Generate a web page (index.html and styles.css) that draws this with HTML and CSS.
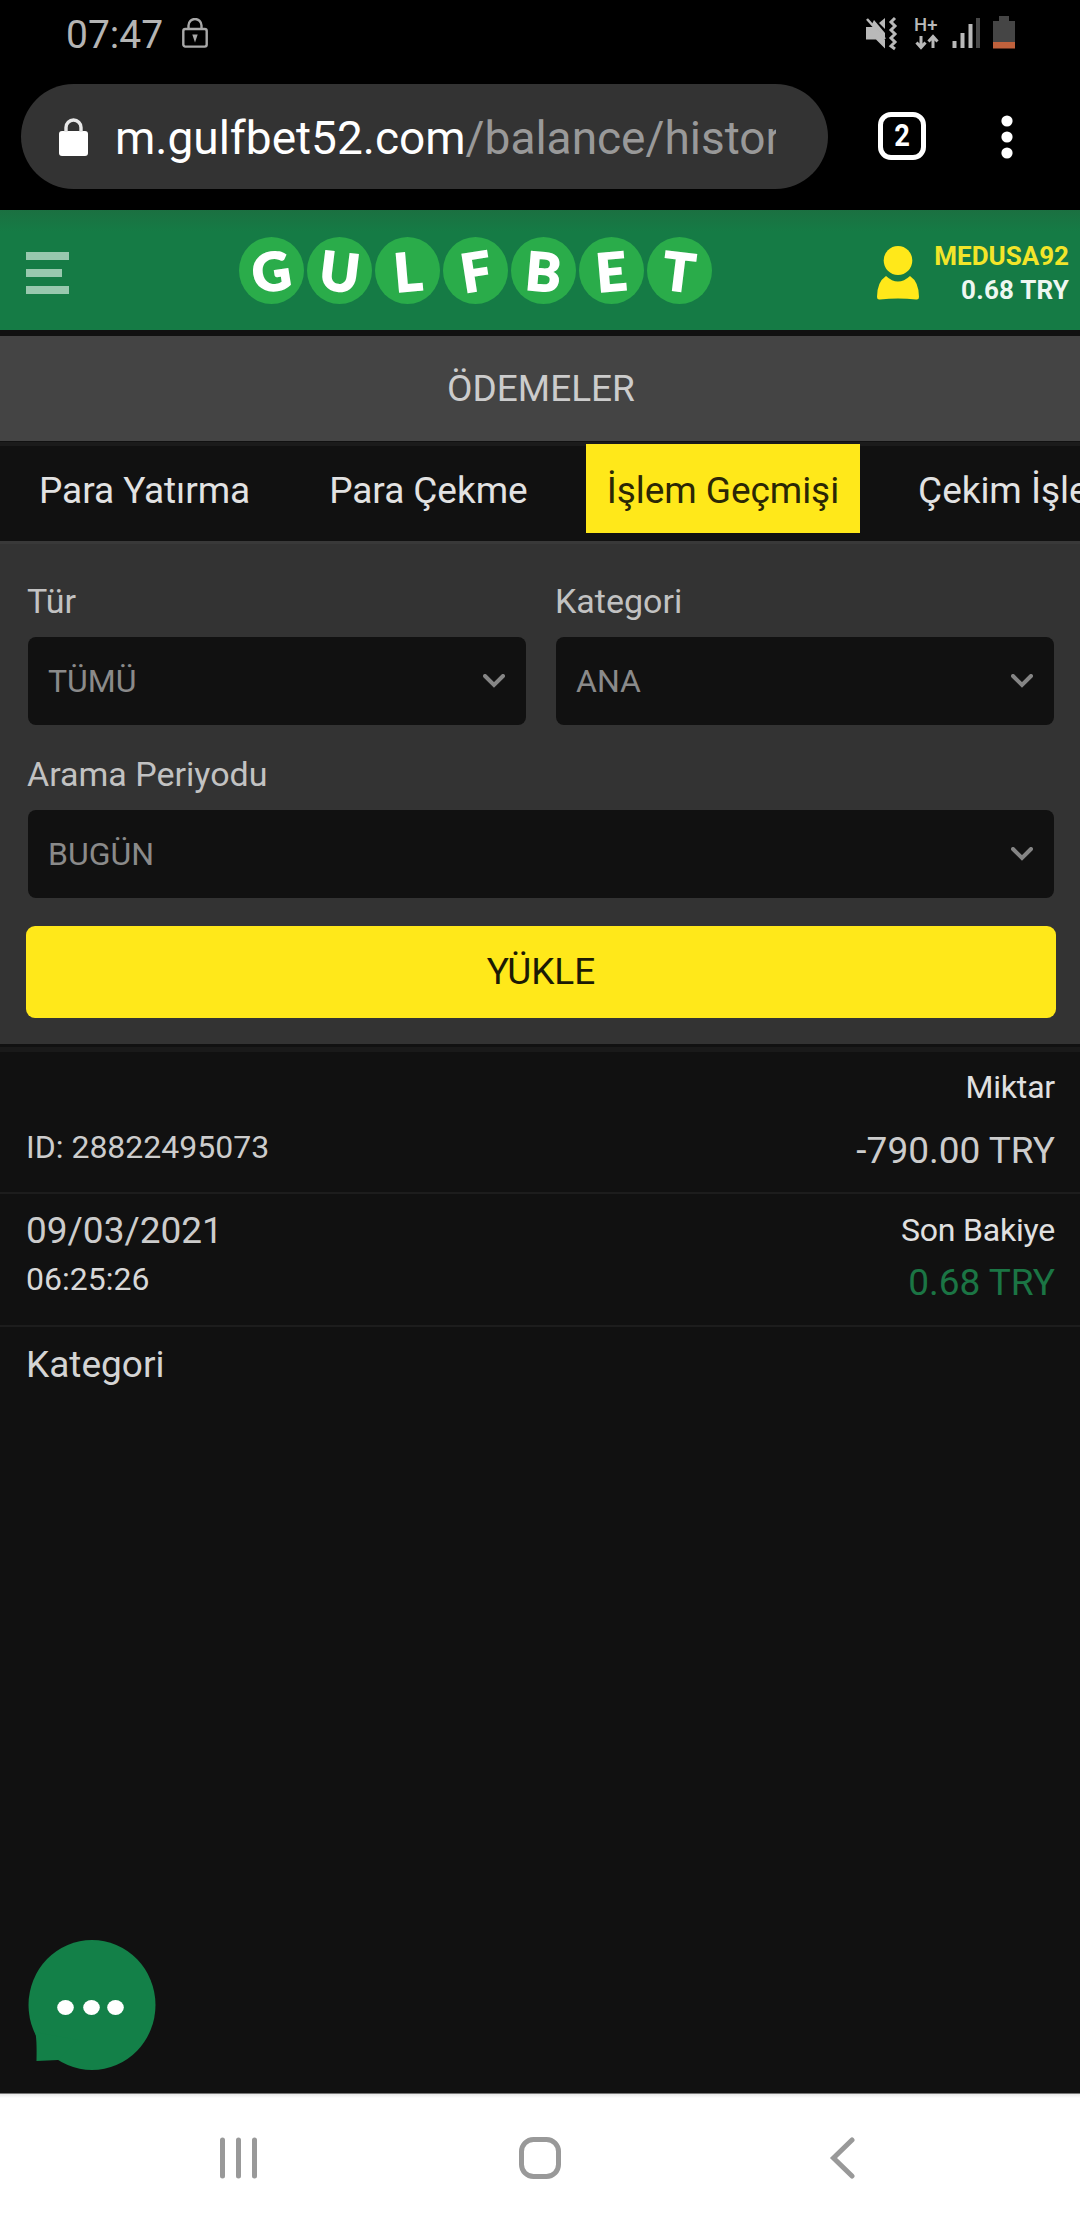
FILE: index.html
```html
<!DOCTYPE html>
<html lang="tr">
<head>
  <meta charset="UTF-8" />
  <meta name="viewport" content="width=device-width, initial-scale=1.0"/>
  <title>Ödemeler</title>
  <link rel="stylesheet" href="styles.css">
</head>
<body>

  <div class="status-bar">
    <span class="clock">07:47</span>
    <svg class="lock-outline" width="26" height="30" viewBox="0 0 26 30">
      <path d="M6.5 11V7.5a6.5 6.5 0 0 1 13 0V11" fill="none" stroke="#a8a8a8" stroke-width="2.4"/>
      <rect x="1.3" y="11" width="23.4" height="17.6" rx="2" fill="none" stroke="#a8a8a8" stroke-width="2.4"/>
      <path d="M10.3 16.5h5.4L13 24.500z" fill="#a8a8a8"/>
    </svg>
    <svg class="status-icons" width="152" height="36" viewBox="0 0 152 36">
      <!-- muted + vibrate -->
      <path d="M1 11h8l11 13v8.500l-9-9H1z" fill="#b9b9b9"/>
      <path d="M7 8l13 14V17L9 4z" fill="#b9b9b9"/>
      <path d="M2 3l18 20" stroke="#b9b9b9" stroke-width="2.600"/>
      <path d="M14 7l6-5v11z" fill="#b9b9b9"/>
      <path d="M30 2l-4 4 4 4-4 4 4 4-4 4 4 4-4 4 4 3" fill="none" stroke="#b9b9b9" stroke-width="3"/>
      <!-- H+ data -->
      <text class="net" x="49" y="15">H+</text>
      <path d="M56 20v11M51.500 26.500l4.500 5 4.500-5M68 32V21M63.500 25.500l4.500-5 4.500 5" fill="none" stroke="#b9b9b9" stroke-width="3"/>
      <!-- signal -->
      <path d="M89.500 25v7M97.500 17v15M105.500 8v24" stroke="#b9b9b9" stroke-width="4"/>
      <path d="M113 2v30" stroke="#484848" stroke-width="4"/>
      <!-- battery -->
      <path d="M134 0h10v5h6v21h-22V5h6z" fill="#454545"/>
      <path d="M128 26h22v6.500h-22z" fill="#c0613c"/>
    </svg>
  </div>

  <div class="browser-bar">
    <div class="url-box">
      <svg width="29" height="38" viewBox="0 0 29 38">
        <rect x="0" y="13" width="29" height="25" rx="3" fill="#fff"/>
        <path d="M7 14V9.500a7.500 7.500 0 0 1 15 0V14" fill="none" stroke="#e8e8e8" stroke-width="3.400"/>
      </svg>
      <div class="url"><span class="host">m.gulfbet52.com</span>/balance/history</div>
    </div>
    <div class="tab-count"><span>2</span></div>
    <svg class="more" width="12" height="44" viewBox="0 0 12 44">
      <circle cx="6" cy="6" r="5.600" fill="#fff"/>
      <circle cx="6" cy="22" r="5.600" fill="#fff"/>
      <circle cx="6" cy="38" r="5.600" fill="#fff"/>
    </svg>
  </div>

  <header class="site-header">
    <div class="menu-btn"><i></i><i class="short"></i><i></i></div>
    <div class="logo">
      <span class="ball"><b class="g">G</b></span>
      <span class="ball"><b class="u">U</b></span>
      <span class="ball"><b class="l">L</b></span>
      <span class="ball"><b class="f">F</b></span>
      <span class="ball"><b class="b">B</b></span>
      <span class="ball"><b class="e">E</b></span>
      <span class="ball"><b class="t">T</b></span>
    </div>
    <div class="account">
      <svg width="42" height="54" viewBox="0 0 42 54">
        <ellipse cx="21" cy="14.500" rx="14.300" ry="14.500" fill="#ffe81a"/>
        <path d="M9 30Q21 41 33 30Q42 36 42 51Q42 54 39 53.500Q21 51.500 3 53.500Q0 54 0 51Q0 36 9 30z" fill="#ffe81a"/>
      </svg>
      <div class="account-text">
        <div class="user">MEDUSA92</div>
        <div class="money">0.68 TRY</div>
      </div>
    </div>
  </header>

  <h1 class="page-title">ÖDEMELER</h1>

  <nav class="tabs">
    <a class="tab">Para Yatırma</a>
    <a class="tab">Para Çekme</a>
    <a class="tab active">İşlem Geçmişi</a>
    <a class="tab">Çekim İşlemleri</a>
  </nav>

  <div class="filters">
    <div class="filter-row">
      <div class="field">
        <label>Tür</label>
        <div class="select">TÜMÜ
          <svg width="22" height="14" viewBox="0 0 22 14"><path d="M2 2l9 9 9-9" fill="none" stroke="#858585" stroke-width="4" stroke-linecap="round"/></svg>
        </div>
      </div>
      <div class="field">
        <label>Kategori</label>
        <div class="select">ANA
          <svg width="22" height="14" viewBox="0 0 22 14"><path d="M2 2l9 9 9-9" fill="none" stroke="#858585" stroke-width="4" stroke-linecap="round"/></svg>
        </div>
      </div>
    </div>
    <div class="filter-row">
      <div class="field">
        <label>Arama Periyodu</label>
        <div class="select">BUGÜN
          <svg width="22" height="14" viewBox="0 0 22 14"><path d="M2 2l9 9 9-9" fill="none" stroke="#858585" stroke-width="4" stroke-linecap="round"/></svg>
        </div>
      </div>
    </div>
    <div class="load-btn">YÜKLE</div>
  </div>

  <main class="results">
    <div class="row row-amount">
      <div class="trans-id">ID: 28822495073</div>
      <div class="right">
        <div class="caption">Miktar</div>
        <div class="amount">-790.00 TRY</div>
      </div>
    </div>
    <div class="row row-balance">
      <div>
        <div class="date">09/03/2021</div>
        <div class="time">06:25:26</div>
      </div>
      <div class="right">
        <div class="caption">Son Bakiye</div>
        <div class="amount green">0.68 TRY</div>
      </div>
    </div>
    <div class="category">Kategori</div>
    <svg class="chat" width="128" height="130" viewBox="0 0 128 130">
      <ellipse cx="64" cy="65" rx="63.500" ry="65" fill="#138048"/>
      <path d="M7 92Q9 97 8.500 121L30 120L50 100z" fill="#138048"/>
      <ellipse cx="37.500" cy="67.500" rx="8.300" ry="7.500" fill="#fff"/>
      <ellipse cx="63.500" cy="67.500" rx="8.300" ry="7.500" fill="#fff"/>
      <ellipse cx="87.500" cy="67.500" rx="8.300" ry="7.500" fill="#fff"/>
    </svg>
  </main>

  <div class="android-nav">
    <svg width="42" height="42" viewBox="0 0 42 42"><path d="M5.500 3v36M21.500 3v36M37.500 3v36" stroke="#999" stroke-width="5" stroke-linecap="round"/></svg>
    <svg width="42" height="42" viewBox="0 0 42 42"><rect x="2.500" y="2.500" width="37" height="37" rx="12" fill="none" stroke="#999" stroke-width="5"/></svg>
    <svg width="42" height="42" viewBox="0 0 42 42"><path d="M31 3L12.500 21l18.500 18" fill="none" stroke="#999" stroke-width="5" stroke-linecap="round"/></svg>
  </div>

</body>
</html>
```
FILE: styles.css
```css
* {
  box-sizing: border-box;
}
body {
  margin: 0;
  height: 2220px;
  display: flex;
  flex-direction: column;
  overflow: hidden;
  background-color: #111;
  color: #ccc;
  font-family: Roboto, sans-serif;
  font-size: 37px;
}
svg {
  display: block;
  flex: none;
}

/* phone status bar */
.status-bar {
  height: 84px;
  display: flex;
  align-items: flex-start;
  padding: 16px 63px 0 66px;
  background-color: #000;
}
.clock {
  width: 116px;
  font-size: 39px;
  line-height: 38px;
  color: #b4b4b4;
}
.lock-outline {
  margin-top: 2px;
}
.status-icons {
  margin-left: auto;
}
.net {
  font-size: 18.5px;
  font-weight: 500;
  fill: #b9b9b9;
}

/* browser address bar */
.browser-bar {
  height: 126px;
  display: flex;
  align-items: flex-start;
  padding: 0 67px 0 21px;
  background-color: #000;
}
.url-box {
  width: 807px;
  height: 105px;
  display: flex;
  align-items: center;
  padding: 0 52px 0 38px;
  border-radius: 53px;
  background-color: #333;
}
.url {
  flex: 1;
  margin-left: 27px;
  overflow: hidden;
  white-space: nowrap;
  font-size: 46px;
  line-height: 64px;
  padding-top: 3px;
  color: #999;
}
.host {
  color: #fff;
}
.tab-count {
  width: 48px;
  height: 48px;
  margin: 28px 0 0 50px;
  border: 5px solid #fff;
  border-radius: 13px;
  color: #fff;
  font-size: 31px;
  font-weight: 700;
  line-height: 38px;
  text-align: center;
}
.tab-count span {
  display: block;
  transform: scaleX(0.88);
}
.more {
  margin: 31px 0 0 auto;
}

/* green header */
.site-header {
  height: 120px;
  display: flex;
  align-items: flex-start;
  padding: 0 11px 0 26px;
  background: linear-gradient(#1b7041, #157b45 22px);
}
.menu-btn {
  width: 43px;
  margin-top: 42px;
  display: flex;
  flex-direction: column;
  gap: 9px;
}
.menu-btn i {
  height: 8px;
  background-color: #98c8ae;
}
.menu-btn .short {
  width: 36px;
}
.logo {
  display: flex;
  gap: 3px;
  margin: 27px 0 0 170px;
}
.ball {
  width: 65px;
  height: 67px;
  border-radius: 50%;
  background-color: #2aac4a;
  display: flex;
  align-items: center;
  justify-content: center;
}
.ball b {
  color: #fff;
  font-family: Lato, sans-serif;
  font-size: 53px;
  font-weight: 900;
  line-height: 66px;
  -webkit-text-stroke: 1.5px #fff;
}
.g, .f {
  transform: rotate(-9deg);
}
.u, .t {
  transform: rotate(7deg);
}
.l, .e {
  transform: rotate(-5deg);
}
.b {
  transform: rotate(5deg);
}
.account {
  margin: 36px 0 0 auto;
  display: flex;
  gap: 15px;
}
.account-text {
  font-size: 26px;
  font-weight: 700;
  line-height: 34px;
  text-align: right;
}
.user {
  margin-top: -7px;
  color: #f2e52a;
}
.money {
  color: #eef7f1;
  letter-spacing: 0.2px;
}

.page-title {
  height: 111px;
  margin: 0;
  padding-left: 2px;
  border-top: 6px solid #111;
  background-color: #444;
  color: #ccc;
  font-size: 37px;
  font-weight: 400;
  line-height: 105px;
  text-align: center;
}

/* section tabs */
.tabs {
  height: 100px;
  display: flex;
  align-items: flex-start;
  gap: 37px;
  padding: 3px 0 0 18px;
  overflow: hidden;
  background: linear-gradient(#111 1px, #1b1b1b 1px, #1b1b1b 5px, #111 5px);
}
.tab {
  flex: none;
  height: 89px;
  padding: 4px 21px 0;
  line-height: 86px;
  letter-spacing: -0.05px;
  color: #e2e2e2;
}
.tab.active {
  background-color: #ffe81a;
  color: #2b2705;
}

/* filter form */
.filters {
  height: 503px;
  padding: 27px 24px 0 26px;
  border-top: 3px solid #393939;
  background-color: #333;
}
.filter-row {
  display: flex;
  gap: 30px;
  margin: 0 0 19px;
  padding: 0 2px;
}
.filter-row:nth-child(2) {
  margin-bottom: 28px;
}
.field {
  flex: 1;
}
.field label {
  display: block;
  margin-left: -1px;
  font-size: 34px;
  line-height: 61px;
  color: #c2c2c2;
}
.select {
  height: 88px;
  margin-top: 5px;
  padding: 0 21px 0 20px;
  display: flex;
  align-items: center;
  justify-content: space-between;
  border-radius: 8px;
  background-color: #111;
  color: #8a8a8a;
  font-size: 32px;
}
.load-btn {
  height: 92px;
  border-radius: 9px;
  background-color: #ffe81a;
  color: #1c1a04;
  line-height: 92px;
  text-align: center;
}

/* transaction list */
.results {
  position: relative;
  flex: 1;
  padding-top: 8px;
  background: linear-gradient(#111 3px, #1a1a1a 3px, #1a1a1a 8px, #111 8px);
}
.row {
  display: flex;
  justify-content: space-between;
  border-bottom: 2px solid #1d1d1d;
}
.row-amount {
  height: 142px;
  padding: 10px 25px 0 26px;
}
.row-balance {
  height: 133px;
  padding: 11px 25px 0 26px;
}
.right {
  text-align: right;
}
.caption {
  font-size: 32px;
  line-height: 51px;
  letter-spacing: -0.2px;
  color: #e0e0e0;
}
.trans-id {
  margin-top: 60px;
  font-size: 32px;
  line-height: 51px;
}
.amount {
  line-height: 54px;
}
.row-amount .amount {
  margin-top: 11px;
}
.green {
  color: #1b7544;
}
.date {
  line-height: 51px;
}
.time {
  font-size: 32px;
  line-height: 47px;
  color: #d8d8d8;
}
.category {
  padding: 13px 26px 0;
  line-height: 50px;
  color: #d4d4d4;
}
/* floats over the list */
.chat {
  position: absolute;
  left: 28px;
  bottom: 23px;
}

/* phone navigation keys */
.android-nav {
  height: 127px;
  display: flex;
  justify-content: space-between;
  padding: 43px 217px 0;
  border-top: 1px solid #777;
  background: linear-gradient(#e8e8e8, #fff 4px);
}
```
